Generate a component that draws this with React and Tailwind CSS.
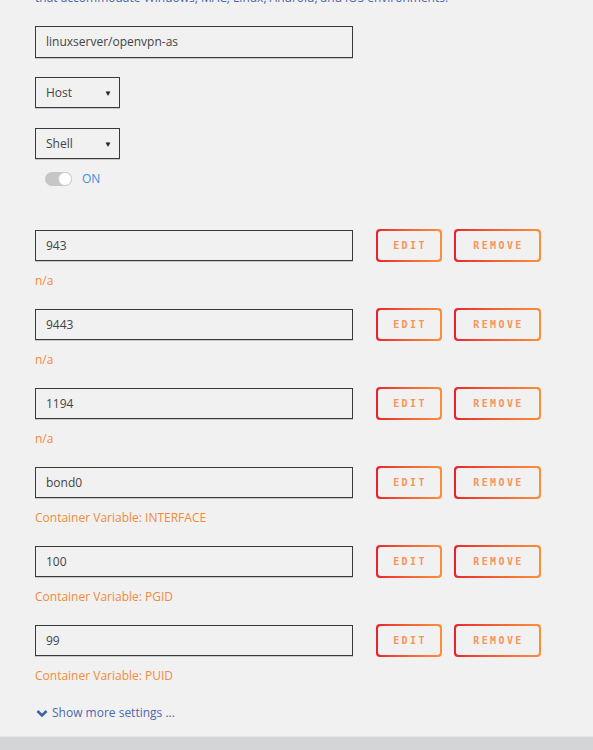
import React from "react";

const rows = [
  { v: "943", h: "n/a" },
  { v: "9443", h: "n/a" },
  { v: "1194", h: "n/a" },
  { v: "bond0", h: "Container Variable: INTERFACE" },
  { v: "100", h: "Container Variable: PGID" },
  { v: "99", h: "Container Variable: PUID" },
];

function GBtn({ label, w }) {
  return (
    <div className={`${w} h-[33px] rounded-[4px] p-[2px] bg-gradient-to-r from-[#e8202e] to-[#fb8f3a]`}>
      <div className="w-full h-full rounded-[3px] bg-[#f1f1f1] flex items-center justify-center">
        <span className="text-[10px] font-bold tracking-[2.4px] text-[#f7935c] pl-[2px]" style={{ fontFamily: '"DejaVu Sans Mono", monospace' }}>
          {label}
        </span>
      </div>
    </div>
  );
}

function Select({ label }) {
  return (
    <div className="w-[85px] h-[31px] border border-[#3a3a3a] flex items-center justify-between pl-[10px] pr-[7px] shadow-[0_1px_0_#c8c8c8]">
      <span className="text-[12px] text-[#444]">{label}</span>
      <span className="text-[8px] text-[#222]">▼</span>
    </div>
  );
}

export default function App() {
  return (
    <div className="w-[593px] h-[750px] bg-[#f1f1f1] flex flex-col overflow-hidden" style={{ fontFamily: '"Open Sans", "Liberation Sans", sans-serif' }}>
      <div className="flex-1 pl-[35px] flex flex-col">
        <div className="text-[12px] leading-[16px] text-[#4a66a8] mt-[-10px] whitespace-nowrap">
          that accommodate Windows, MAC, Linux, Android, and iOS environments.
        </div>
        <div className="mt-[20px] w-[318px] h-[32px] border border-[#3a3a3a] flex items-center pl-[10px] shadow-[0_1px_0_#c8c8c8]">
          <span className="text-[12px] text-[#444]">linuxserver/openvpn-as</span>
        </div>
        <div className="mt-[19px]">
          <Select label="Host" />
        </div>
        <div className="mt-[20px]">
          <Select label="Shell" />
        </div>
        <div className="mt-[11px] ml-[10px] flex items-center gap-[10px]">
          <div className="w-[27px] h-[14px] rounded-full bg-[#c6c6c6] relative">
            <div className="absolute right-0 top-0 w-[14px] h-[14px] rounded-full bg-white border border-[#cfcfcf]" />
          </div>
          <span className="text-[12px] text-[#3d8fe0]">ON</span>
        </div>
        <div className="mt-[41px] flex flex-col gap-[19px]">
          {rows.map((r) => (
            <div key={r.v} className="flex flex-col">
              <div className="flex items-center">
                <div className="w-[318px] h-[31px] border border-[#3a3a3a] flex items-center pl-[10px] shadow-[0_1px_0_#c8c8c8]">
                  <span className="text-[12px] text-[#444]">{r.v}</span>
                </div>
                <div className="ml-[23px]">
                  <GBtn label="EDIT" w="w-[66px]" />
                </div>
                <div className="ml-[12px]">
                  <GBtn label="REMOVE" w="w-[87px]" />
                </div>
              </div>
              <div className="mt-[11px] text-[12px] leading-[16px] text-[#f38a3c]">{r.h}</div>
            </div>
          ))}
        </div>
        <div className="mt-[20px] flex items-center gap-[4px] text-[#4f68b0]">
          <svg width="12" height="12" viewBox="0 0 24 24" className="ml-[1px]">
            <path d="M3 8 L12 17 L21 8" fill="none" stroke="#3f5faa" strokeWidth="5" strokeLinejoin="miter" />
          </svg>
          <span className="text-[12px]">Show more settings ...</span>
        </div>
      </div>
      <div className="h-[14px] bg-[#d4d5d6] border-t border-[#e2e2e2]" />
    </div>
  );
}
